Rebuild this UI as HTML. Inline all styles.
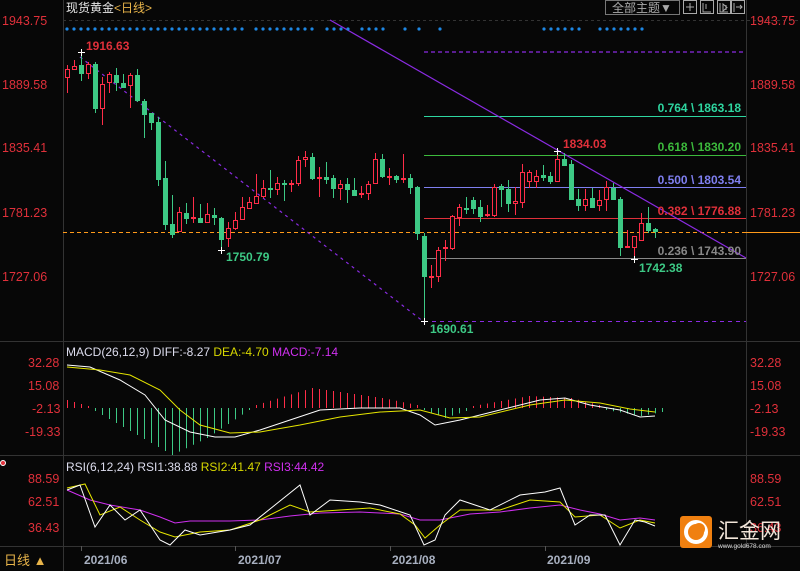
<!DOCTYPE html>
<html><head><meta charset="utf-8"><style>
html,body{margin:0;padding:0;background:#070707;width:800px;height:571px;overflow:hidden}
svg{display:block}
text{font-family:"Liberation Sans","Noto Sans CJK SC",sans-serif}
</style></head><body>
<svg id="s" width="800" height="571" viewBox="0 0 800 571" xmlns="http://www.w3.org/2000/svg">
<rect width="800" height="571" fill="#070707"/>
<!-- axes -->
<line x1="63.5" y1="0" x2="63.5" y2="571" stroke="#333"/>
<line x1="746.5" y1="0" x2="746.5" y2="546" stroke="#333"/>
<line x1="0" y1="341.5" x2="800" y2="341.5" stroke="#333"/>
<line x1="0" y1="455.5" x2="800" y2="455.5" stroke="#333"/>
<line x1="0" y1="546.5" x2="800" y2="546.5" stroke="#333"/>
<line x1="63" y1="20.5" x2="800" y2="20.5" stroke="#333" stroke-dasharray="3,3"/>
<!-- title -->
<text x="66" y="12" font-size="12" fill="#e6e6e6">现货黄金</text>
<text x="114" y="12" font-size="12" fill="#e8b44a">&lt;日线&gt;</text>
<rect x="605.5" y="0.5" width="74" height="14" fill="none" stroke="#777"/>
<text x="612" y="12" font-size="12" fill="#aaa">全部主题▼</text>
<g fill="none" stroke="#aaa">
<rect x="683.5" y="0.5" width="13" height="13"/><rect x="700.5" y="0.5" width="13" height="13"/><rect x="717.5" y="0.5" width="13" height="13"/><rect x="731.5" y="0.5" width="13" height="13"/>
<path d="M690 3v8M686 7h8M703 3v9h8M706 4v5M726 5v5M720 3v9h8M723 4v7l4-3.5zM734 3v9M736 7h6M740 5l2 2-2 2"/>
</g>
<!-- price axis labels -->
<g font-size="12.5" fill="#e0303a">
<text x="2" y="25">1943.75</text><text x="750" y="25">1943.75</text>
<text x="2" y="89">1889.58</text><text x="750" y="89">1889.58</text>
<text x="2" y="152">1835.41</text><text x="750" y="152">1835.41</text>
<text x="2" y="217">1781.23</text><text x="750" y="217">1781.23</text>
<text x="2" y="281">1727.06</text><text x="750" y="281">1727.06</text>
</g>
<!-- fib lines -->
<line x1="424" y1="52" x2="746" y2="52" stroke="#8a2be2" stroke-width="1.3" stroke-dasharray="4,3"/>
<line x1="424" y1="116.5" x2="746" y2="116.5" stroke="#2ed6a0"/>
<line x1="424" y1="155.5" x2="746" y2="155.5" stroke="#3cba3c"/>
<line x1="424" y1="187.5" x2="746" y2="187.5" stroke="#7f7ff0"/>
<line x1="424" y1="218.5" x2="746" y2="218.5" stroke="#e0303a"/>
<line x1="424" y1="258.5" x2="746" y2="258.5" stroke="#888"/>
<line x1="424" y1="321.5" x2="746" y2="321.5" stroke="#8a2be2" stroke-dasharray="4,4"/>
<line x1="63" y1="232.5" x2="746" y2="232.5" stroke="#ff9a1a" stroke-dasharray="4,3"/>
<line x1="746" y1="232.5" x2="800" y2="232.5" stroke="#ff9a1a"/>
<line x1="330" y1="20" x2="746" y2="258" stroke="#8a2be2" stroke-width="1.2"/>
<line x1="80" y1="57" x2="424" y2="322" stroke="#8a2be2" stroke-width="1.2" stroke-dasharray="3,4"/>
<g font-size="12" font-weight="bold" text-anchor="end">
<text x="741" y="112" fill="#2ed6a0">0.764 \ 1863.18</text>
<text x="741" y="151" fill="#3cba3c">0.618 \ 1830.20</text>
<text x="741" y="184" fill="#7f7ff0">0.500 \ 1803.54</text>
<text x="741" y="215" fill="#e0303a">0.382 \ 1776.88</text>
<text x="741" y="255" fill="#888">0.236 \ 1743.90</text>
</g>
<g font-size="12" font-weight="bold">
<text x="86" y="50" fill="#e0303a">1916.63</text>
<text x="226" y="261" fill="#3dc985">1750.79</text>
<text x="430" y="333" fill="#3dc985">1690.61</text>
<text x="563" y="148" fill="#e0303a">1834.03</text>
<text x="639" y="272" fill="#3dc985">1742.38</text>
</g>
<g id="c"></g>
<!-- markers -->
<g stroke="#fff"><path d="M78 52.5h7M81.5 49v7M218 250.5h7M221.5 247v7M421 321.5h7M424.5 318v7M554 151.5h7M557.5 148v7M631 259.5h7M634.5 256v7"/></g>
<!-- MACD -->
<text x="66" y="356" font-size="12"><tspan fill="#dde">MACD(26,12,9) DIFF:-8.27 </tspan><tspan fill="#d8d800">DEA:-4.70 </tspan><tspan fill="#d030f0">MACD:-7.14</tspan></text>
<g font-size="12.5" fill="#e0303a">
<text x="28" y="367">32.28</text><text x="750" y="367">32.28</text>
<text x="28" y="390">15.08</text><text x="750" y="390">15.08</text>
<text x="32" y="413">-2.13</text><text x="750" y="413">-2.13</text>
<text x="25" y="436">-19.33</text><text x="750" y="436">-19.33</text>
</g>
<g id="h"></g>
<polyline fill="none" stroke="#fff" points="67,365 90,367 120,380 145,395 165,420 190,432 215,437 235,437 260,430 290,420 320,410 360,408 400,408 420,415 435,425 460,420 500,410 540,400 565,398 590,405 620,410 640,417 655,416"/>
<polyline fill="none" stroke="#e6e600" points="67,367 100,370 130,375 160,390 180,410 200,425 230,433 260,432 300,425 340,417 380,412 420,410 450,418 480,417 530,405 565,400 600,403 630,409 655,412"/>
<!-- RSI -->
<circle cx="3" cy="463" r="2.5" fill="#e0303a" stroke="#fff"/>
<text x="66" y="471" font-size="12"><tspan fill="#dde">RSI(6,12,24) RSI1:38.88 </tspan><tspan fill="#d8d800">RSI2:41.47 </tspan><tspan fill="#d030f0">RSI3:44.42</tspan></text>
<g font-size="12.5" fill="#e0303a">
<text x="28" y="483">88.59</text><text x="750" y="483">88.59</text>
<text x="28" y="506">62.51</text><text x="750" y="506">62.51</text>
<text x="28" y="532">36.43</text><text x="750" y="532">36.43</text>
</g>
<polyline fill="none" stroke="#d030f0" points="67,490 90,500 110,505 140,510 160,517 175,523 190,521 230,521 260,520 290,516 320,513 360,512 400,514 420,520 440,520 470,514 500,512 530,508 560,505 580,510 600,514 620,520 640,518 655,520"/>
<polyline fill="none" stroke="#e6e600" points="67,488 85,484 100,515 120,507 140,520 160,532 175,537 200,532 230,530 260,520 290,505 310,512 340,510 370,508 400,514 415,525 425,538 440,525 460,510 500,510 530,500 560,502 575,517 600,515 620,528 640,520 655,523"/>
<polyline fill="none" stroke="#fff" points="67,490 80,485 95,527 110,505 125,520 140,510 160,540 170,545 185,530 200,535 230,530 250,525 275,505 300,485 310,515 330,500 360,502 380,505 410,515 424,545 435,540 445,515 460,500 490,510 520,495 545,492 560,488 575,525 590,515 605,515 620,545 635,520 645,522 655,526"/>
<!-- time axis -->
<text x="4" y="565" font-size="13" fill="#e8b44a">日线 ▲</text>
<g stroke="#555"><path d="M81.5 546v5M235.5 546v5M390.5 546v5M545.5 546v5"/></g>
<g font-size="12" font-weight="bold" fill="#a8b0c0">
<text x="84" y="564">2021/06</text><text x="238" y="564">2021/07</text><text x="392" y="564">2021/08</text><text x="547" y="564">2021/09</text>
</g>
<!-- logo -->
<rect x="680" y="516" width="32" height="32" rx="3" fill="#f08010"/>
<circle cx="696" cy="532" r="10" fill="none" stroke="#fff" stroke-width="4"/>
<circle cx="699" cy="529" r="6" fill="#f08010"/>
<text x="718" y="538" font-size="21" fill="#f2e6da">汇金网</text>
<text x="718" y="548" font-size="6.5" fill="#ddd">www.gold678.com</text>
<g id="d" fill="#1e88e5"></g>
</svg>
<script>
var ns="http://www.w3.org/2000/svg";
function el(p,t,a){var e=document.createElementNS(ns,t);for(var k in a)e.setAttribute(k,a[k]);p.appendChild(e);}
// [open,close,high,low] in pixel y
var C=[[77,69,65,93],[69,66,60,69],[65,73,55,81],[73,64,62,79],[64,108,62,113],[108,84,77,125],[82,74,72,93],[75,82,68,91],[83,87,74,87],[85,75,73,108],[75,100,69,102],[101,114,99,138],[113,122,113,130],[122,179,117,186],[178,224,161,230],[224,234,195,238],[231,212,207,231],[213,218,203,224],[217,217,197,223],[218,222,204,223],[222,214,203,222],[215,217,208,225],[218,239,217,250],[238,228,222,247],[228,220,212,230],[219,207,197,220],[208,202,197,209],[203,196,174,203],[196,188,180,198],[188,188,170,198],[189,183,177,195],[183,184,180,201],[184,183,180,192],[183,160,156,186],[159,157,151,167],[157,178,153,180],[178,177,167,197],[177,179,162,184],[178,188,175,198],[188,184,180,200],[184,189,178,203],[190,195,178,195],[194,193,186,198],[193,184,181,200],[183,159,153,184],[159,176,154,178],[176,176,168,185],[176,179,175,183],[179,178,154,183],[178,187,174,194],[187,233,186,240],[236,276,233,322],[276,276,265,288],[276,250,247,282],[248,247,240,261],[248,216,215,250],[217,207,204,226],[208,208,197,214],[200,208,197,214],[207,216,200,222],[215,214,205,217],[215,187,184,217],[186,189,184,207],[189,203,180,212],[203,201,187,215],[202,172,164,208],[181,172,170,188],[181,176,170,188],[175,177,165,181],[176,181,172,184],[181,159,155,181],[159,165,153,165],[164,199,160,200],[199,205,189,211],[205,199,189,211],[198,207,188,207],[205,200,190,211],[199,187,181,211],[188,199,183,200],[199,247,197,256],[247,246,230,247],[247,236,236,258],[240,223,213,240],[223,230,207,233],[229,231,228,238]];
var g=document.getElementById('c');
C.forEach(function(c,i){var x=67+7*i,up=c[1]<c[0]||(c[1]==c[0]&&i%2==0);
var col=up?'#ff2d48':'#3dc985';var t=Math.min(c[0],c[1]),b=Math.max(c[0],c[1]);if(b-t<1)b=t+1;
el(g,'line',{x1:x+.5,x2:x+.5,y1:c[2],y2:t,stroke:col});el(g,'line',{x1:x+.5,x2:x+.5,y1:b,y2:c[3],stroke:col});
if(up)el(g,'rect',{x:x-1.5,y:t+.5,width:4,height:b-t,fill:'#070707',stroke:col});
else el(g,'rect',{x:x-2,y:t,width:5,height:b-t+1,fill:col});});
// histogram
var h=document.getElementById('h');
var pts=[[0,8],[3,2],[4,-3],[15,-47],[20,-30],[26,-2],[27,3],[35,20],[45,10],[50,3],[51,-2],[54,-10],[57,-3],[58,2],[66,12],[72,10],[76,3],[77,-2],[82,-8],[85,-4]];
for(var i=0;i<86;i++){var v=0;for(var j=0;j<pts.length-1;j++){if(i>=pts[j][0]&&i<=pts[j+1][0]){var f=(i-pts[j][0])/(pts[j+1][0]-pts[j][0]||1);v=pts[j][1]+f*(pts[j+1][1]-pts[j][1]);break;}}
var x=67.5+7*i;if(Math.abs(v)<1)continue;el(h,'line',{x1:x,x2:x,y1:408,y2:408-v,stroke:v>0?'#ff2d48':'#3dc985'});}
// dots
var d=document.getElementById('d');
var ranges=[[67,245],[256,315],[327,350],[362,385],[405,405],[419,419],[440,440],[544,580],[600,643]];
ranges.forEach(function(r){for(var x=r[0];x<=r[1];x+=7)el(d,'circle',{cx:x,cy:29,r:1.6});});
</script>
</body></html>
